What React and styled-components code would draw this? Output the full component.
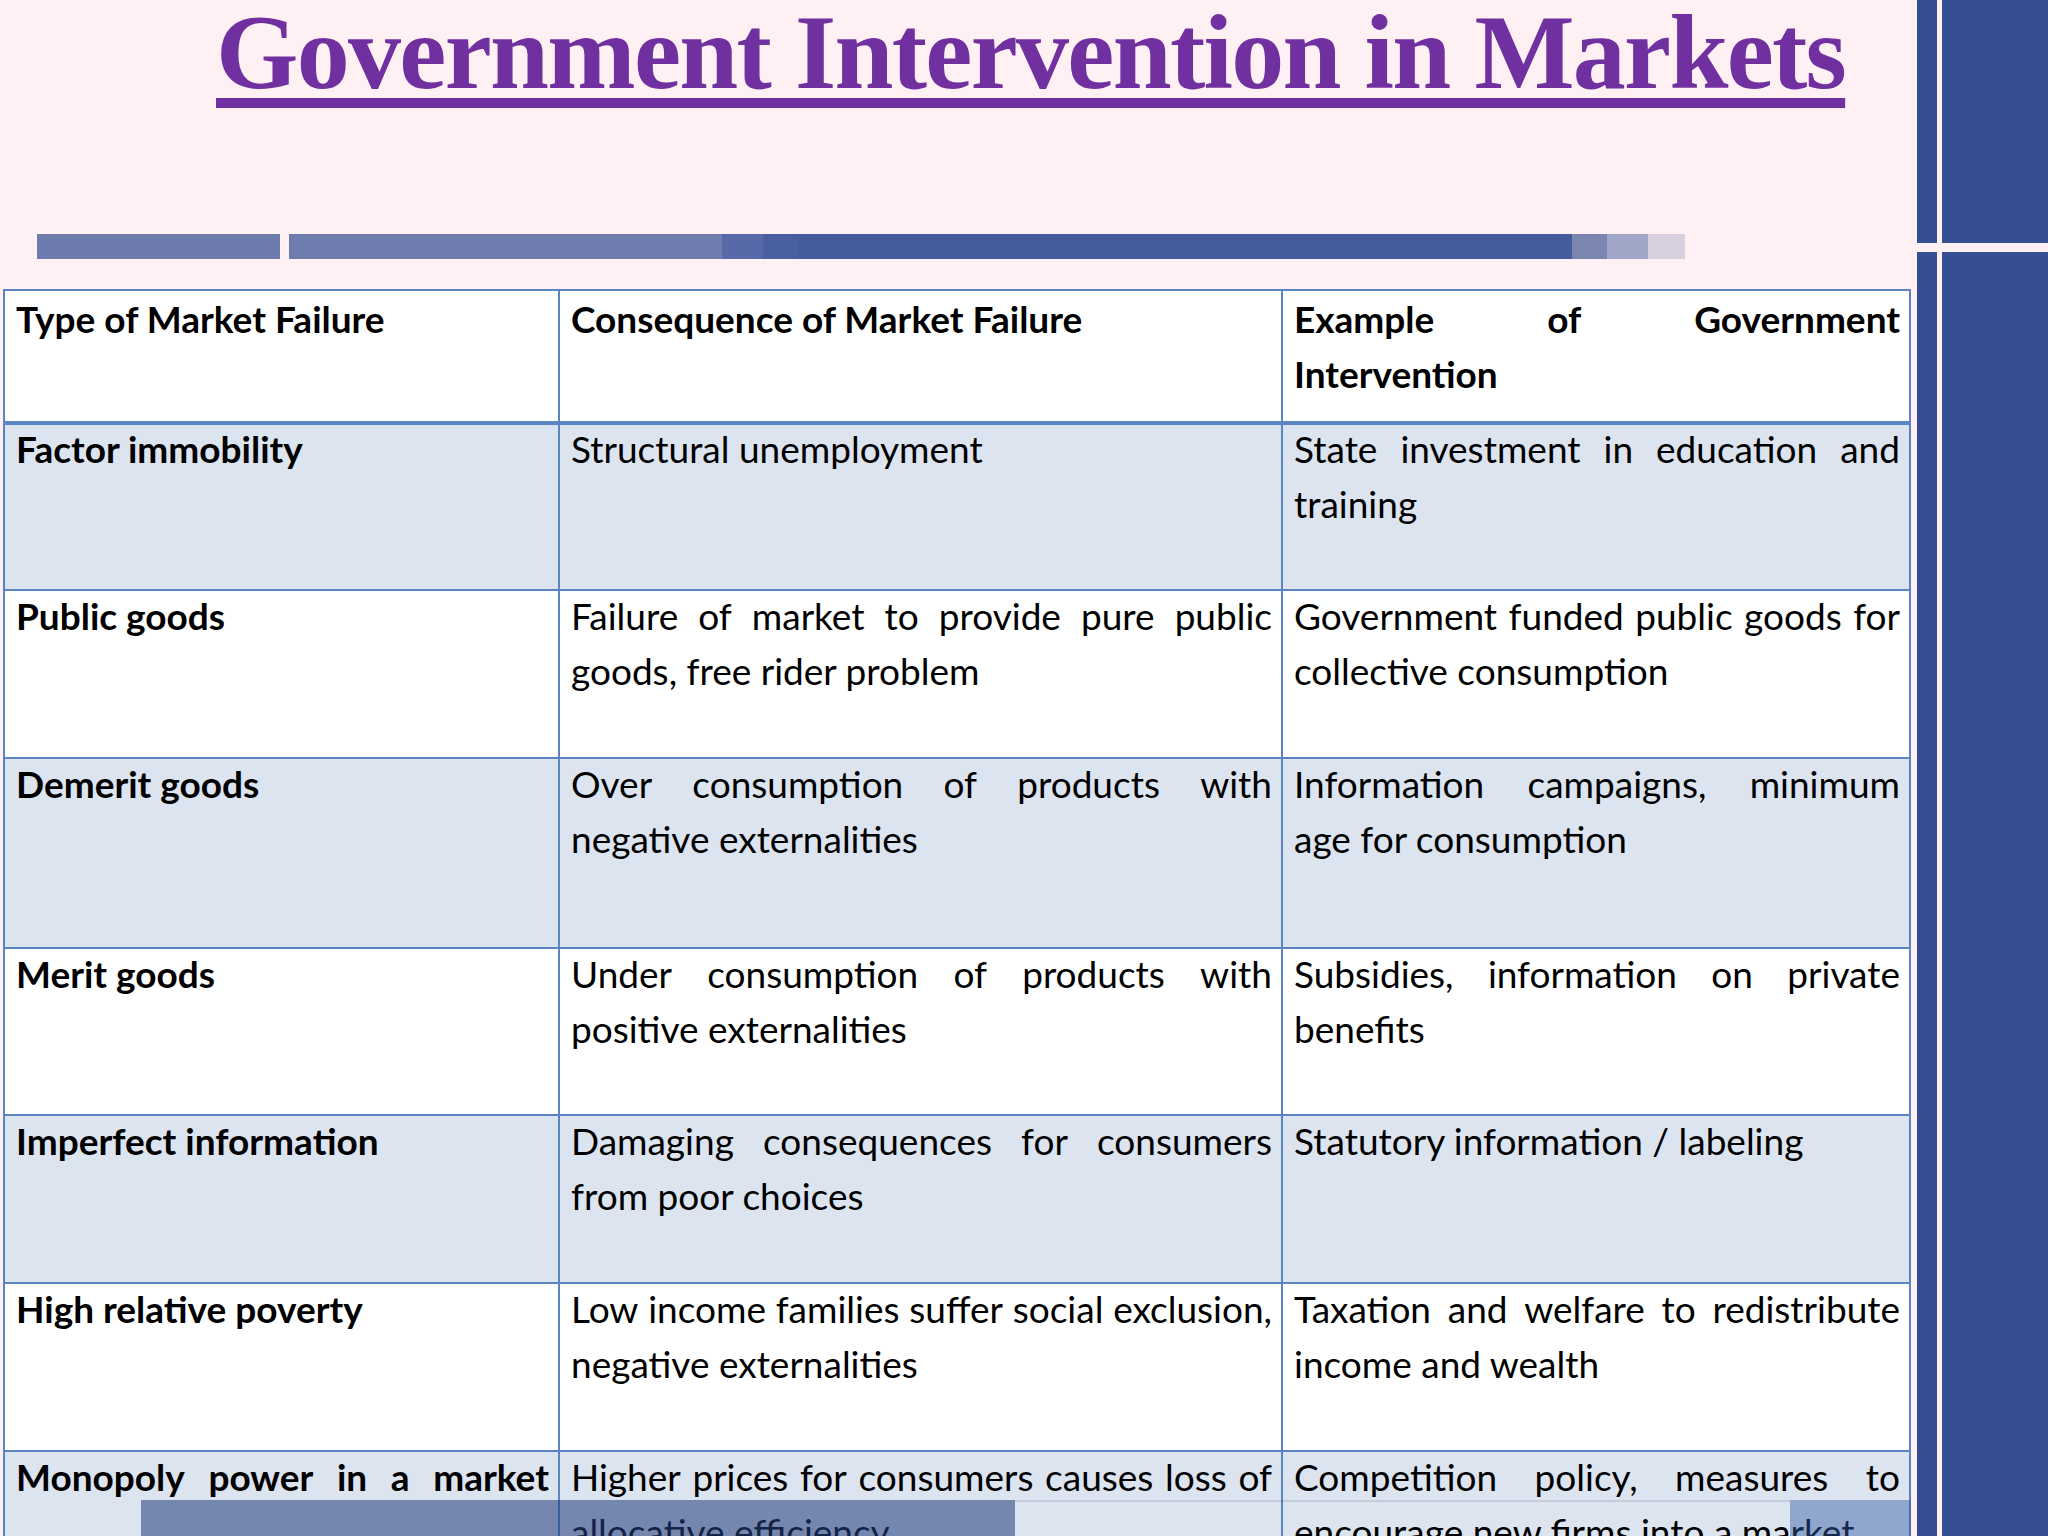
import React from "react";
import styled, { createGlobalStyle } from "styled-components";

const GlobalStyle = createGlobalStyle`
  html, body { margin: 0; padding: 0; }
  body { background: #fff0f3; font-family: Lato, "Open Sans", sans-serif; }
  * { box-sizing: border-box; }
`;

const Slide = styled.div`
  position: relative;
  width: 2048px;
  height: 1536px;
  overflow: hidden;
  display: flex;
  align-items: flex-start;
  background: #fff0f3;
`;

const Main = styled.div`
  width: 1917px;
  flex-shrink: 0;
  display: flex;
  flex-direction: column;
`;

const Side = styled.aside`
  flex: 1;
  align-self: stretch;
  display: grid;
  grid-template-columns: 20px 1fr;
  grid-template-rows: 243px 1fr;
  gap: 9px 5px;
`;

const SideBlock = styled.div`
  background: #354e94;
`;

const Header = styled.header`
  height: 289px;
  flex-shrink: 0;
  display: flex;
  flex-direction: column;
`;

const Title = styled.h1`
  margin: 0;
  padding-left: 216px;
  font-family: "Liberation Serif", "Times New Roman", serif;
  font-weight: bold;
  font-size: 106px;
  line-height: 106px;
  letter-spacing: -1.7px;
  color: #7030a0;
  white-space: nowrap;
`;

const Underlined = styled.span`
  text-decoration: underline;
  text-decoration-thickness: 10px;
  text-underline-offset: 10px;
`;

const StripeBar = styled.div`
  display: flex;
  height: 25px;
  margin: auto 0 30px 37px;
`;

const Stripe = styled.div`
  width: ${(p) => p.$w}px;
  margin-left: ${(p) => p.$gap || 0}px;
  background: ${(p) => p.$c};
`;

const Table = styled.div`
  flex-shrink: 0;
  margin-left: 3px;
  width: 1908px;
  border-left: 2px solid #5a85c2;
  border-right: 2px solid #5a85c2;
  color: #000;
`;

const Row = styled.div`
  display: grid;
  grid-template-columns: 553px 723px 1fr;
  height: ${(p) => p.$h}px;
  background: ${(p) => (p.$shade ? "#dce4f0" : "#ffffff")};
  border-top: ${(p) => p.$top}px solid #5a85c2;
`;

const Cell = styled.div`
  padding: 0 9px 0 11px;
  border-left: ${(p) => (p.$first ? "none" : "2px solid #5a85c2")};
  font-size: 37px;
  line-height: 55px;
  font-weight: ${(p) => (p.$bold ? 700 : 400)};

  & > :first-child {
    margin-top: ${(p) => p.$lift}px;
  }
`;

const Line = styled.div`
  white-space: nowrap;
`;

const JustLine = styled.div`
  display: flex;
  justify-content: space-between;
  gap: 6px;
  white-space: nowrap;
`;

const PlayerBar = styled.div`
  position: absolute;
  left: 141px;
  top: 1500px;
  width: 1770px;
  height: 36px;
  display: flex;
`;

const Played = styled.div`
  width: 874px;
  background: rgba(35, 62, 125, 0.56);
`;

const Remaining = styled.div`
  flex: 1;
  border-top: 2px solid rgba(60, 70, 100, 0.15);
`;

const Buffered = styled.div`
  width: 121px;
  background: rgba(50, 90, 165, 0.45);
`;

const stripes = [
  { w: 243, c: "#6e7bad" },
  { w: 433, c: "#6f7dae", gap: 9 },
  { w: 41, c: "#5769a9" },
  { w: 36, c: "#4a5fa0" },
  { w: 773, c: "#455b9c" },
  { w: 35, c: "#7a86b0" },
  { w: 41, c: "#a0a6c8" },
  { w: 37, c: "#d6d0e0" },
];

const rows = [
  {
    h: 132, top: 2, shade: false, header: true, lift: 0,
    cells: [
      ["Type of Market Failure"],
      ["Consequence of Market Failure"],
      ["Example of Government", "Intervention"],
    ],
  },
  {
    h: 168, top: 4, shade: true, lift: -4,
    cells: [
      ["Factor immobility"],
      ["Structural unemployment"],
      ["State investment in education and", "training"],
    ],
  },
  {
    h: 168, top: 2, shade: false, lift: -3,
    cells: [
      ["Public goods"],
      ["Failure of market to provide pure public", "goods, free rider problem"],
      ["Government funded public goods for", "collective consumption"],
    ],
  },
  {
    h: 190, top: 2, shade: true, lift: -3,
    cells: [
      ["Demerit goods"],
      ["Over consumption of products with", "negative externalities"],
      ["Information campaigns, minimum", "age for consumption"],
    ],
  },
  {
    h: 167, top: 2, shade: false, lift: -3,
    cells: [
      ["Merit goods"],
      ["Under consumption of products with", "positive externalities"],
      ["Subsidies, information on private", "benefits"],
    ],
  },
  {
    h: 168, top: 2, shade: true, lift: -3,
    cells: [
      ["Imperfect information"],
      ["Damaging consequences for consumers", "from poor choices"],
      ["Statutory information / labeling"],
    ],
  },
  {
    h: 168, top: 2, shade: false, lift: -3,
    cells: [
      ["High relative poverty"],
      ["Low income families suffer social exclusion,", "negative externalities"],
      ["Taxation and welfare to redistribute", "income and wealth"],
    ],
  },
  {
    h: 168, top: 2, shade: true, lift: -3,
    cells: [
      ["Monopoly power in a market", ""],
      ["Higher prices for consumers causes loss of", "allocative efficiency"],
      ["Competition policy, measures to", "encourage new firms into a market"],
    ],
  },
];

function CellLines({ lines }) {
  return lines.map((text, i) =>
    i < lines.length - 1 ? (
      <JustLine key={i}>
        {text.split(" ").map((w, j) => (
          <span key={j}>{w}</span>
        ))}
      </JustLine>
    ) : (
      <Line key={i}>{text || "\u00a0"}</Line>
    )
  );
}

export default function App() {
  return (
    <>
      <GlobalStyle />
      <Slide>
        <Main>
          <Header>
            <Title>
              <Underlined>Government Intervention in Markets</Underlined>
            </Title>
            <StripeBar>
              {stripes.map((s, i) => (
                <Stripe key={i} $w={s.w} $c={s.c} $gap={s.gap} />
              ))}
            </StripeBar>
          </Header>
          <Table>
            {rows.map((r, i) => (
              <Row key={i} $h={r.h} $top={r.top} $shade={r.shade}>
                {r.cells.map((lines, j) => (
                  <Cell
                    key={j}
                    $first={j === 0}
                    $bold={r.header || j === 0}
                    $lift={r.lift}
                  >
                    <CellLines lines={lines} />
                  </Cell>
                ))}
              </Row>
            ))}
          </Table>
        </Main>
        <Side>
          <SideBlock />
          <SideBlock />
          <SideBlock />
          <SideBlock />
        </Side>
        <PlayerBar>
          <Played />
          <Remaining />
          <Buffered />
        </PlayerBar>
      </Slide>
    </>
  );
}
